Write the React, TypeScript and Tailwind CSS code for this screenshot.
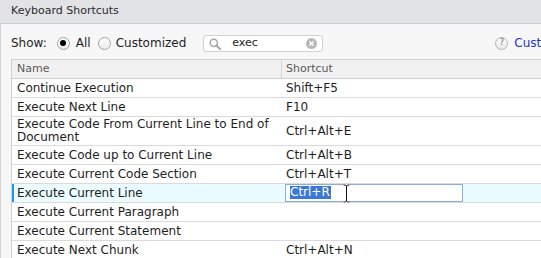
import React from 'react';

interface ShortcutRow {
  name: string;
  shortcut: string;
  height: string;
  selected?: boolean;
}

const rows: ShortcutRow[] = [
  { name: 'Continue Execution', shortcut: 'Shift+F5', height: 'h-[19px]' },
  { name: 'Execute Next Line', shortcut: 'F10', height: 'h-[19px]' },
  { name: 'Execute Code From Current Line to End of Document', shortcut: 'Ctrl+Alt+E', height: 'h-[29px]' },
  { name: 'Execute Code up to Current Line', shortcut: 'Ctrl+Alt+B', height: 'h-[19px]' },
  { name: 'Execute Current Code Section', shortcut: 'Ctrl+Alt+T', height: 'h-[19px]' },
  { name: 'Execute Current Line', shortcut: 'Ctrl+R', height: 'h-[19px]', selected: true },
  { name: 'Execute Current Paragraph', shortcut: '', height: 'h-[19px]' },
  { name: 'Execute Current Statement', shortcut: '', height: 'h-[19px]' },
  { name: 'Execute Next Chunk', shortcut: 'Ctrl+Alt+N', height: 'h-[19px]' },
];

const Radio: React.FC<{ checked?: boolean }> = ({ checked }) => (
  <span className="shrink-0 w-[13px] h-[13px] rounded-full border border-[#a3a3a3] bg-gradient-to-b from-white to-[#ececec] flex items-center justify-center">
    {checked && <span className="w-[6px] h-[6px] rounded-full bg-black" />}
  </span>
);

const App: React.FC = () => {
  return (
    <div className="w-[541px] h-[258px] overflow-hidden bg-[#f7f7f7] font-['DejaVu_Sans',sans-serif] text-[#1e1e1e]">
      {/* title bar */}
      <div className="h-[24px] bg-[#e2e3e6] border-b border-[#cbcbcd] flex items-center pl-[11px] text-[11px] text-[#2b2b2b]">
        Keyboard Shortcuts
      </div>

      <div className="h-[234px] border-l border-[#d4d4d4] pl-[10px]">
        {/* toolbar */}
        <div className="h-[35px] pt-[3px] flex items-center text-[12px] whitespace-nowrap">
          <span className="shrink-0">Show:</span>
          <span className="shrink-0 ml-[10px]"><Radio checked /></span>
          <span className="shrink-0 ml-[6px]">All</span>
          <span className="shrink-0 ml-[7px]"><Radio /></span>
          <span className="shrink-0 ml-[5px]">Customized</span>

          <div className="shrink-0 ml-[17px] mt-[1px] w-[120px] h-[17px] bg-white border border-[#d2d2d2] rounded-[3px] flex items-center relative">
            <svg width="12" height="12" viewBox="0 0 12 12" className="ml-[5px] shrink-0">
              <circle cx="4.8" cy="4.8" r="3.6" fill="none" stroke="#a6a6a6" strokeWidth="1.5" />
              <line x1="7.5" y1="7.5" x2="11" y2="11" stroke="#a6a6a6" strokeWidth="2" strokeLinecap="round" />
            </svg>
            <span className="ml-[11px] text-[11px] text-[#222]">exec</span>
            <span className="absolute right-[5px] top-[2px] w-[11px] h-[11px] rounded-full bg-[#b8b8b8] flex items-center justify-center">
              <svg width="7" height="7" viewBox="0 0 7 7">
                <path d="M1.5 1.5 L5.5 5.5 M5.5 1.5 L1.5 5.5" stroke="#fff" strokeWidth="1.4" />
              </svg>
            </span>
          </div>

          <span className="shrink-0 ml-[172px] w-[13px] h-[13px] rounded-full border border-[#b4b4b4] bg-gradient-to-b from-white to-[#e8e8e8] flex items-center justify-center text-[8px] text-[#666] leading-none">
            ?
          </span>
          <span className="shrink-0 ml-[6px] text-[#2433c8]">Customize Commands...</span>
        </div>

        {/* table */}
        <div className="w-[540px] border-l border-[#cfcfcf] bg-white">
          <div className="grid grid-cols-[269px_1fr] h-[20px] bg-[#f1f1f1] border-y border-[#cfcfcf] text-[11px] text-[#5a5a5a]">
            <div className="flex items-center pl-[5px]">Name</div>
            <div className="flex items-center pl-[4px] border-l border-[#d6d6d6]">Shortcut</div>
          </div>

          {rows.map((row) => (
            <div
              key={row.name}
              className={`grid grid-cols-[269px_1fr] ${row.height} border-b border-[#dadada] text-[12px] leading-[13px] ${
                row.selected ? 'bg-[#eafcff]' : 'bg-white'
              }`}
            >
              <div className="flex items-center pl-[5px] pr-[8px] relative">
                {row.selected && (
                  <span className="absolute left-0 top-0 bottom-0 w-[2px] bg-[#2196f3]" />
                )}
                {row.name}
              </div>
              {row.selected ? (
                <div className="flex items-center pl-[4px] relative">
                  <div className="w-[178px] h-[18px] -mt-[1px] bg-white border border-[#86aee0] flex items-center pl-[4px]">
                    <span className="bg-[#3a77d6] text-white leading-[13px] pr-[1px]">{row.shortcut}</span>
                  </div>
                  <svg width="9" height="19" viewBox="0 0 9 19" className="absolute left-[61px] top-0">
                    <path d="M1.5 1 H3.5 L4.5 2 L5.5 1 H7.5 M4.5 2 V17 M1.5 18 H3.5 L4.5 17 L5.5 18 H7.5" fill="none" stroke="#fff" strokeWidth="2.6" />
                    <path d="M1.5 1 H3.5 L4.5 2 L5.5 1 H7.5 M4.5 2 V17 M1.5 18 H3.5 L4.5 17 L5.5 18 H7.5" fill="none" stroke="#111" strokeWidth="1" />
                  </svg>
                </div>
              ) : (
                <div className="flex items-center pl-[5px]">{row.shortcut}</div>
              )}
            </div>
          ))}
        </div>
      </div>
    </div>
  );
};

export default App;
